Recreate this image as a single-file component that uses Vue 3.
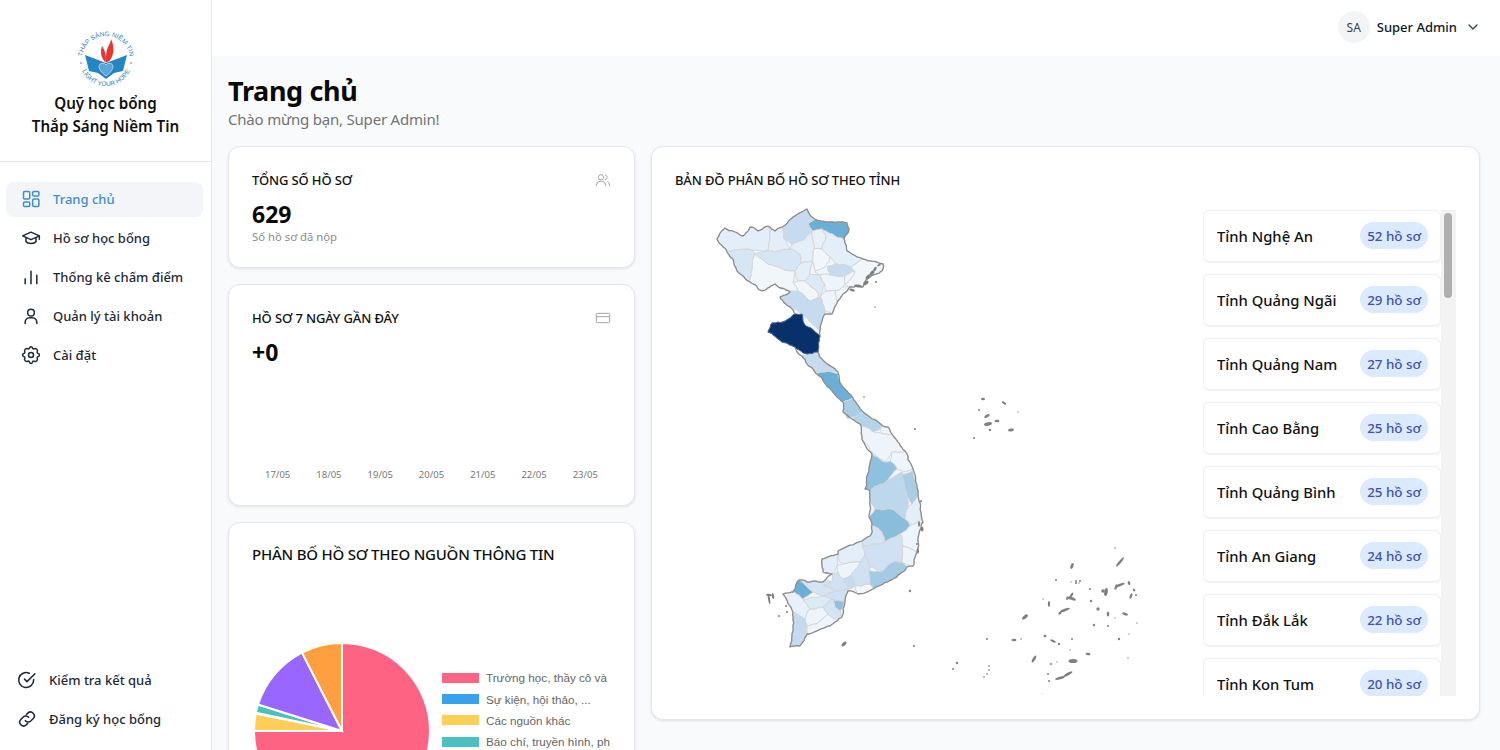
<template>
  <div class="layout">
    <!-- sidebar -->
    <aside class="sidebar">
      <div class="brand">
        <svg class="logo" viewBox="0 0 60 60" width="60" height="60">
          <defs>
            <path id="arcTop" d="M6 30 A24 24 0 0 1 54 30" />
            <path id="arcBottom" d="M5 38 A26.3 26.3 0 0 0 55 38" />
          </defs>
          <text class="logo-text"><textPath href="#arcTop" startOffset="50%" text-anchor="middle">THẮP SÁNG NIỀM TIN</textPath></text>
          <text class="logo-text"><textPath href="#arcBottom" startOffset="50%" text-anchor="middle">LIGHT YOUR HOPE</textPath></text>
          <path d="M9 25 L30 33 L51 25 L47 41 L38 43 L30 49 L22 43 L13 41 Z" fill="#2584c2" />
          <path d="M35 9 C38 15 39 24 33.500 31 L30 32.500 C30 27 29.500 22 32.500 16 C34 13 35 11 35 9 Z" fill="#e5362f" />
          <path d="M26 16 C24 22 25 28 29.500 32.500 C30.500 27 29.500 21 26 16 Z" fill="#e5362f" />
          <path d="M30 46 C25 42 23 39 23 36.500 C23 33 28 32 30 35 C32 32 37 33 37 36.500 C37 39 35 42 30 46 Z" fill="#5aa6d6" stroke="#d8ebf7" stroke-width=".7" />
          <circle cx="5" cy="33" r=".8" fill="#e5362f" />
          <circle cx="55" cy="33" r=".8" fill="#e5362f" />
        </svg>
        <div class="brand-name">Quỹ học bổng<br />Thắp Sáng Niềm Tin</div>
      </div>

      <nav class="nav">
        <a v-for="item in menu" :key="item.label" class="nav-item" :class="{ active: item.active }">
          <svg class="nav-icon" viewBox="0 0 24 24" fill="none" stroke="currentColor" stroke-width="1.8" stroke-linecap="round" stroke-linejoin="round" v-html="item.icon"></svg>
          <span>{{ item.label }}</span>
        </a>
      </nav>

      <div class="bottom-links">
        <a v-for="item in links" :key="item.label" class="bottom-item">
          <svg class="nav-icon" viewBox="0 0 24 24" fill="none" stroke="currentColor" stroke-width="1.9" stroke-linecap="round" stroke-linejoin="round" v-html="item.icon"></svg>
          <span>{{ item.label }}</span>
        </a>
      </div>
    </aside>

    <div class="content">
      <header class="topbar">
        <div class="avatar">SA</div>
        <span class="user-name">Super Admin</span>
        <svg class="chevron" viewBox="0 0 24 24" width="16" height="16" fill="none" stroke="#374151" stroke-width="2" stroke-linecap="round" stroke-linejoin="round"><path d="M6 9l6 6 6-6" /></svg>
      </header>

      <main class="main">
        <h1 class="title">Trang chủ</h1>
        <p class="subtitle">Chào mừng bạn, Super Admin!</p>

        <div class="grid">
          <div class="left-col">
            <section class="card stat-card">
              <div class="card-head">
                <h3>TỔNG SỐ HỒ SƠ</h3>
                <svg viewBox="0 0 24 24" width="16" height="16" fill="none" stroke="#a3a3a3" stroke-width="1.5" stroke-linecap="round" stroke-linejoin="round"><circle cx="9" cy="8" r="4" /><path d="M2 21v-1a6 6 0 0 1 6-6h2a6 6 0 0 1 6 6v1" /><path d="M15.500 4.200a4 4 0 0 1 0 7.600M19 14.500a6 6 0 0 1 3 5.500v1" /></svg>
              </div>
              <div class="stat-value">629</div>
              <div class="stat-note">Số hồ sơ đã nộp</div>
            </section>

            <section class="card week-card">
              <div class="card-head">
                <h3>HỒ SƠ 7 NGÀY GẦN ĐÂY</h3>
                <svg viewBox="0 0 24 24" width="16" height="16" fill="none" stroke="#a3a3a3" stroke-width="1.5"><rect x="2" y="5" width="20" height="14" rx="1.5" /><path d="M2 10h20" /></svg>
              </div>
              <div class="stat-value">+0</div>
              <div class="dates">
                <span v-for="d in dates" :key="d">{{ d }}</span>
              </div>
            </section>

            <section class="card pie-card">
              <h2>PHÂN BỐ HỒ SƠ THEO NGUỒN THÔNG TIN</h2>
              <div class="pie-row">
                <svg class="pie" viewBox="-90 -90 180 180" width="180" height="180">
                  <path v-for="s in slices" :key="s.color" :d="s.d" :fill="s.color" stroke="#fff" stroke-width="2" />
                </svg>
                <ul class="legend">
                  <li v-for="l in legend" :key="l.text">
                    <i :style="{ background: l.color }"></i>
                    <span>{{ l.text }}</span>
                  </li>
                </ul>
              </div>
            </section>
          </div>

          <section class="card map-card">
            <h3 class="map-title">BẢN ĐỒ PHÂN BỐ HỒ SƠ THEO TỈNH</h3>
            <div class="map-body">
              <svg class="map" viewBox="700 200 480 495" width="480" height="495">
                <polygon :points="outline" fill="#eef4fb" />
                <polygon v-for="(p, i) in provinces" :key="i" :points="p.pts" :fill="p.c" stroke="#d6d6d6" stroke-width="1" stroke-linejoin="round" />
                <polygon :points="outline" fill="none" stroke="#8c8c8c" stroke-width="1.3" stroke-linejoin="round" />
                <polygon :points="darkArea" fill="#08306b" stroke="#4a6690" stroke-width="1" />
                <ellipse v-for="(d, i) in islands" :key="'i' + i" :cx="d[0]" :cy="d[1]" :rx="d[2]" :ry="d[3]" :transform="`rotate(${d[4]} ${d[0]} ${d[1]})`" fill="#808080" />
              </svg>
              <div class="province-list">
                <div v-for="p in ranking" :key="p.name" class="province-row">
                  <span class="province-name">{{ p.name }}</span>
                  <span class="province-badge">{{ p.count }} hồ sơ</span>
                </div>
                <div class="scroll-track"><div class="scroll-thumb"></div></div>
              </div>
            </div>
          </section>
        </div>
      </main>
    </div>
  </div>
</template>

<script setup>
const menu = [
  { label: 'Trang chủ', active: true, icon: '<rect x="3" y="3" width="7.5" height="9" rx="1.5"/><rect x="14" y="3" width="7.5" height="5.5" rx="1.5"/><rect x="3" y="15.5" width="7.5" height="5.5" rx="1.5"/><rect x="14" y="12" width="7.5" height="9" rx="1.5"/>' },
  { label: 'Hồ sơ học bổng', icon: '<path d="M2 9.500 12 5l10 4.500L12 14 2 9.500z"/><path d="M6 12v4.500c2 2.600 10 2.600 12 0V12"/><path d="M22 9.500v4"/>' },
  { label: 'Thống kê chấm điểm', icon: '<path d="M5 20v-6M12 20V5M19 20v-10"/>' },
  { label: 'Quản lý tài khoản', icon: '<circle cx="12" cy="8" r="4"/><path d="M5 21v-1.500A5.500 5.500 0 0 1 10.500 14h3a5.500 5.500 0 0 1 5.500 5.500V21"/>' },
  { label: 'Cài đặt', icon: '<circle cx="12" cy="12" r="3"/><path d="M10.300 3.300c.4-1.800 3-1.800 3.400 0a1.700 1.700 0 0 0 2.600 1.100c1.500-.9 4.300 1.800 3.300 3.300a1.700 1.700 0 0 0 1.100 2.600c1.800.4 1.800 3 0 3.400a1.700 1.700 0 0 0-1.100 2.600c1 1.500-1.800 4.300-3.300 3.300a1.700 1.700 0 0 0-2.600 1.100c-.4 1.800-3 1.800-3.400 0a1.700 1.700 0 0 0-2.600-1.100c-1.500 1-4.300-1.800-3.300-3.300a1.700 1.700 0 0 0-1.100-2.600c-1.800-.4-1.800-3 0-3.400a1.700 1.700 0 0 0 1.100-2.600c-1-1.500 1.800-4.200 3.300-3.300a1.700 1.700 0 0 0 2.600-1.100z"/>' }
]

const links = [
  { label: 'Kiểm tra kết quả', icon: '<path d="M20 11.500V12a9 9 0 1 1-5.300-8.200"/><path d="M9 11l3 3 9.500-9.500"/>' },
  { label: 'Đăng ký học bổng', icon: '<path d="M10 14a4.500 4.500 0 0 0 6.500.4l3-3a4.600 4.600 0 0 0-6.500-6.500l-1.700 1.700"/><path d="M14 10a4.500 4.500 0 0 0-6.500-.4l-3 3a4.600 4.600 0 0 0 6.500 6.500l1.700-1.700"/>' }
]

const dates = ['17/05', '18/05', '19/05', '20/05', '21/05', '22/05', '23/05']

const legend = [
  { color: '#ff6384', text: 'Trường học, thầy cô và' },
  { color: '#36a2eb', text: 'Sự kiện, hội thảo, ...' },
  { color: '#ffce56', text: 'Các nguồn khác' },
  { color: '#4bc0c0', text: 'Báo chí, truyền hình, ph' }
]

// góc tính từ đỉnh, theo chiều kim đồng hồ
const sliceAngles = [
  ['#ff6384', 0, 270],
  ['#ffce56', 270, 281.5],
  ['#36a2eb', 281.5, 282],
  ['#4bc0c0', 282, 287.5],
  ['#9966ff', 287.5, 333],
  ['#ff9f40', 333, 360]
]

const slices = sliceAngles.map(([color, a, b]) => {
  const r = 88
  const pt = (deg) => {
    const t = (deg * Math.PI) / 180
    return `${(r * Math.sin(t)).toFixed(2)} ${(-r * Math.cos(t)).toFixed(2)}`
  }
  return { color, d: `M0 0 L${pt(a)} A${r} ${r} 0 ${b - a > 180 ? 1 : 0} 1 ${pt(b)} Z` }
})

const ranking = [
  { name: 'Tỉnh Nghệ An', count: 52 },
  { name: 'Tỉnh Quảng Ngãi', count: 29 },
  { name: 'Tỉnh Quảng Nam', count: 27 },
  { name: 'Tỉnh Cao Bằng', count: 25 },
  { name: 'Tỉnh Quảng Bình', count: 25 },
  { name: 'Tỉnh An Giang', count: 24 },
  { name: 'Tỉnh Đắk Lắk', count: 22 },
  { name: 'Tỉnh Kon Tum', count: 20 }
]

// làm gồ ghề cạnh bản đồ; jitter chỉ phụ thuộc trung điểm nên cạnh chung vẫn khớp
const noise = (x, y) => {
  const s = Math.sin(x * 12.9898 + y * 78.233) * 43758.5453
  return s - Math.floor(s) - 0.5
}

const subdivide = (a, b, depth) => {
  const len = Math.hypot(a[0] - b[0], a[1] - b[1])
  if (depth === 0 || len < 3) return []
  const amp = Math.min(len * 0.22, 2.4)
  const mx = (a[0] + b[0]) / 2
  const my = (a[1] + b[1]) / 2
  const m = [mx + noise(mx, my) * amp, my + noise(my, mx) * amp]
  return [...subdivide(a, m, depth - 1), m, ...subdivide(m, b, depth - 1)]
}

const roughen = (str) => {
  const pts = str.split(' ').map((p) => p.split(',').map(Number))
  const out = []
  pts.forEach((p, i) => {
    out.push(p, ...subdivide(p, pts[(i + 1) % pts.length], 3))
  })
  return out.map((p) => `${p[0].toFixed(1)},${p[1].toFixed(1)}`).join(' ')
}

const rawProvinces = [
  { c: '#e3eef9', pts: '717,240 725,229 735,233 743,237 750,228 758,232 768,227 770,240 768,252 752,251 735,251 727,253' },
  { c: '#d7e6f5', pts: '727,253 735,251 752,251 755,255 752,270 750,283 737,272 733,260' },
  { c: '#f1f6fb', pts: '755,255 768,265 778,268 795,272 793,283 798,292 785,290 775,285 762,292 750,283 752,270' },
  { c: '#e3eef9', pts: '768,227 775,232 782,228 784,240 790,250 780,252 768,252 770,240' },
  { c: '#d7e6f5', pts: '768,252 780,252 790,250 800,255 800,265 795,272 778,268 768,265 755,255' },
  { c: '#c6dbef', pts: '782,228 793,218 807,210 815,220 808,225 812,232 805,240 792,246 784,240' },
  { c: '#6baed6', pts: '808,225 815,220 828,223 847,224 849,230 844,240 835,237 822,230 812,232' },
  { c: '#e3eef9', pts: '792,246 805,240 812,232 814,250 812,262 800,265 800,255 790,250' },
  { c: '#e8f0fa', pts: '812,232 822,230 826,240 822,250 814,250' },
  { c: '#f1f6fb', pts: '814,250 822,250 830,258 825,268 815,272 812,262' },
  { c: '#e3eef9', pts: '822,230 835,237 844,240 847,252 863,260 850,268 835,265 830,258 822,250 826,240' },
  { c: '#c6dbef', pts: '827,268 835,265 850,268 855,272 845,277 830,276' },
  { c: '#f1f6fb', pts: '850,268 863,260 883,265 882,272 867,280 863,288 850,288 845,285 855,272' },
  { c: '#e3eef9', pts: '795,272 800,265 812,262 810,275 805,282 798,282' },
  { c: '#f1f6fb', pts: '810,275 812,262 815,272 820,276' },
  { c: '#f1f6fb', pts: '793,283 798,282 805,282 815,290 820,298 810,302 798,292' },
  { c: '#dceaf6', pts: '805,282 810,275 820,276 825,285 820,298 815,290' },
  { c: '#eef4fb', pts: '825,285 820,276 830,276 845,277 845,285 843,288 835,292 826,292' },
  { c: '#f1f6fb', pts: '835,292 843,288 850,288 843,295 838,303' },
  { c: '#eef4fb', pts: '820,298 826,292 835,292 838,303 832,315 825,312' },
  { c: '#c6dbef', pts: '780,298 790,293 798,292 810,302 820,298 825,312 825,315 820,332 812,325 802,315 790,308' },
  { c: '#c6dbef', pts: '802,357 807,355 818,353 825,363 838,373 817,373 807,365' },
  { c: '#6baed6', pts: '817,375 825,373 838,375 842,387 853,399 843,403 832,392' },
  { c: '#a9cde5', pts: '843,403 853,399 863,413 857,417 848,420 843,413' },
  { c: '#b5d4e9', pts: '852,420 857,417 863,413 883,427 880,430 873,433 860,425' },
  { c: '#eef4fb', pts: '880,430 883,427 888,428 892,435 883,435' },
  { c: '#eef4fb', pts: '862,440 860,425 873,433 883,435 892,435 905,452 892,453 885,463 872,453' },
  { c: '#eef4fb', pts: '892,453 905,452 913,470 903,473 897,470 890,462' },
  { c: '#8fc1de', pts: '872,455 885,463 890,462 897,470 887,482 870,492 865,490 867,477 870,465' },
  { c: '#bdd7ec', pts: '870,492 887,482 902,473 908,507 905,520 892,510 875,510 870,500' },
  { c: '#a9cde5', pts: '902,475 913,472 918,495 912,505 907,497' },
  { c: '#e3eef9', pts: '908,507 912,505 918,495 922,520 913,527 905,520' },
  { c: '#8abcdc', pts: '875,510 892,510 905,520 910,527 900,535 885,543 882,533 872,526 869,518' },
  { c: '#eef4fb', pts: '910,527 923,523 918,540 917,553 903,547 900,535' },
  { c: '#d3e4f3', pts: '872,526 882,533 885,543 875,545 862,547 862,542 870,537' },
  { c: '#cfe1f2', pts: '885,543 900,535 903,547 902,563 893,563 883,572 870,568 865,555 862,547 875,545' },
  { c: '#eef4fb', pts: '903,547 917,553 913,567 902,563' },
  { c: '#a5cbe4', pts: '868,572 883,572 893,563 902,563 907,568 893,580 873,590 870,585 870,568' },
  { c: '#e3eef9', pts: '838,552 862,542 862,547 865,555 860,563 843,565 838,560' },
  { c: '#cfe1f2', pts: '860,563 865,555 870,568 870,585 855,587 850,577' },
  { c: '#e3eef9', pts: '822,560 838,555 838,565 832,575 823,573' },
  { c: '#eef4fb', pts: '837,567 843,565 860,563 850,577 843,580 838,573' },
  { c: '#c6dbef', pts: '843,580 850,577 855,587 848,590' },
  { c: '#f4f8fc', pts: '855,587 870,585 873,590 858,595' },
  { c: '#cfe1f2', pts: '832,583 832,575 838,573 843,580 848,590 835,592 823,587' },
  { c: '#6baed6', pts: '799,581 802,583 813,593 803,600 793,593' },
  { c: '#d3e4f3', pts: '802,583 807,583 832,583 823,587 835,592 823,597 813,593' },
  { c: '#e8f0fa', pts: '783,595 793,593 803,600 810,610 805,620 793,613' },
  { c: '#dceaf6', pts: '803,600 823,597 832,600 823,608 810,610' },
  { c: '#cfe1f2', pts: '823,597 835,592 848,590 845,602 832,600' },
  { c: '#8fc1de', pts: '832,600 845,602 840,612 835,608' },
  { c: '#d3e4f3', pts: '823,608 832,600 835,608 840,612 842,618 837,622 828,615' },
  { c: '#eef4fb', pts: '810,610 823,608 828,615 817,625 807,627 805,620' },
  { c: '#eef4fb', pts: '817,625 828,615 837,622 830,627 807,635 807,627' },
  { c: '#c6dbef', pts: '793,620 793,613 805,620 807,635 800,647 790,648 792,637' }
]

const provinces = rawProvinces.map((p) => ({ c: p.c, pts: roughen(p.pts) }))

const darkArea = roughen('768,333 772,324 783,323 795,315 802,315 806,327 820,337 818,353 807,355 795,348 782,343')

const outline = roughen('717,240 725,229 735,233 743,237 750,228 758,232 768,227 775,232 782,228 793,218 807,210 815,220 828,223 847,224 849,230 844,240 847,252 863,260 883,265 882,272 867,280 863,288 850,288 843,295 832,315 825,315 820,332 820,337 818,353 825,363 838,373 842,387 853,399 863,413 883,427 888,428 892,435 905,452 913,470 918,495 922,520 923,523 918,540 917,553 913,567 907,568 893,580 873,590 858,595 848,592 845,602 842,618 837,622 830,627 807,635 800,647 790,648 792,637 793,620 793,613 783,595 793,593 799,581 807,583 823,583 832,575 823,573 822,560 838,555 838,552 862,542 870,537 872,526 869,518 870,500 870,492 865,490 867,477 870,465 872,455 862,440 860,425 852,420 843,413 843,403 832,392 817,375 807,365 802,357 795,348 782,343 768,333 772,324 783,323 795,315 790,308 780,298 790,293 775,285 762,292 750,283 737,272 733,260 727,253')

// đảo nhỏ: cx, cy, rx, ry, góc
const islands = [
  [983, 400, 2, 1.200, 0], [1004, 404, 2.500, 1.200, 30], [979, 411, 1, 1, 0], [987, 417, 3, 1.500, -30], [988, 425, 4, 1.800, -10], [997, 422, 2.500, 1.200, 0], [990, 431, 1.200, 1.200, 0], [1011, 431, 3, 1.500, -10], [974, 439, 1, 1, 0], [1018, 413, .7, .7, 0],
  [1115, 549, .8, .8, 0], [1120, 563, 6, 1.300, -50], [1072, 567, 3, 1.500, -70], [1076, 582, 1, 1, 0], [1056, 581, 1, 1, 0], [1071, 583, .7, .7, 0], [1079, 584, .7, .7, 0], [1076, 584, 1, 1, 0], [1071, 597, 4, 1.200, -60], [1080, 582, 1, 1, 0], [1090, 590, 1, 1, 0], [1106, 593, 4, 1.800, -80], [1103, 592, 1.800, 1.800, 0], [1120, 586, 5, 1.200, -20], [1116, 588, 3, 1.200, -70], [1129, 584, 2, 1.200, 70], [1134, 591, 1.500, 1.200, 60], [1136, 596, 1, 1, 0], [1131, 597, 3, 1.200, -70], [1070, 599, 4, 1.300, 10], [1073, 600, 3, 1.300, 20], [1067, 600, 1, 1, 0], [1043, 600, .7, .7, 0], [1049, 605, 3, 1.200, 90], [1091, 602, 1.200, 1.200, 0], [1098, 610, 1.700, 1.700, 0], [1108, 615, 2.500, 1.300, 90], [1125, 615, 3, 1.300, 20], [1065, 611, 5, 1.300, -20], [1060, 614, 2, 1.200, -40], [1115, 619, .7, .7, 0], [1094, 626, 1.200, 1.200, 0], [1108, 627, 1, 1, 0], [1137, 624, .7, .7, 0], [1025, 618, 3.500, 1.600, -40],
  [987, 640, 1, 1, 0], [1014, 641, 2.500, 1.200, 0], [1021, 640, .8, .8, 0], [1045, 637, 1.500, 1.200, -20], [1053, 642, 3, 1.200, 25], [1059, 645, 1.200, 1.200, 0], [1072, 640, 1, 1, 0], [1119, 640, 1.200, 1.200, 0], [1129, 635, .7, .7, 0], [1088, 655, 2.500, 1.200, 10], [1070, 651, .7, .7, 0], [1034, 660, 4, 1.300, -60], [1051, 665, 1, 1, 0], [1057, 663, .7, .7, 0], [1073, 662, 4.500, 2, 0], [1128, 659, .7, .7, 0],
  [957, 664, 1.200, 1.200, 0], [953, 670, 1, 1, 0], [989, 667, 1, .8, 0], [989, 671, 1, .8, 0], [987, 675, 1, .8, 0], [984, 678, 1, .8, 0], [1068, 675, 5, 1.300, -30], [1060, 679, 5, 1.300, -15], [1048, 675, 1, 1, 0], [1049, 682, 1, 1, 0], [1042, 695, .6, .6, 0],
  // quanh Hạ Long, Phú Quốc, Côn Đảo
  [868, 278, 3, 1.700, -50], [872, 274, 3, 1.700, -50], [866, 284, 3, 1.700, -40], [858, 287, 4, 1.400, 10], [852, 291, 3, 1.200, 20], [875, 270, 2.500, 1.300, -60], [879, 266, 2, 1, -30], [876, 283, 1, 1, 0], [875, 308, .8, .8, 0], [864, 398, 1, .8, 0],
  [769, 596, 3, 1.200, 10], [769, 600, 1, 5, -10], [773, 597, 1.200, 3, -10], [786, 607, 1, 1, 0], [787, 613, 1, 1, 0], [779, 617, 1, 1, 0], [910, 592, 1.200, 1.200, 0], [844, 645, 3, 1.700, -40], [914, 647, 1, 1, 0],
  [915, 430, 1, 1, 0], [921, 502, 1, 1, 0], [919, 525, 1, 3, 0], [922, 530, 1.500, 2.500, 0], [917, 545, 1, 1, 0], [918, 552, 1, 3, 0]
]
</script>

<style>
html, body {
  margin: 0;
  height: 100%;
  overflow: hidden;
}
</style>

<style scoped>
* {
  box-sizing: border-box;
}

.layout {
  display: flex;
  height: 750px;
  overflow: hidden;
  font-family: "Noto Sans", "Open Sans", sans-serif;
  color: #111827;
  background: #f8fafc;
}

/* sidebar */
.sidebar {
  width: 212px;
  flex-shrink: 0;
  display: flex;
  flex-direction: column;
  background: #fff;
  border-right: 1px solid #e5e7eb;
}

.brand {
  height: 162px;
  padding-top: 30px;
  text-align: center;
  border-bottom: 1px solid #e5e7eb;
}

.logo {
  display: block;
  margin: 0 auto;
}

.logo-text {
  font-family: "Liberation Sans", sans-serif;
  font-size: 6.500px;
  fill: #1f7fbd;
}

.brand-name {
  margin-top: 2px;
  font-size: 15.200px;
  font-weight: 600;
  line-height: 23px;
  color: #111;
}

.nav {
  padding: 20px 8px 0 6px;
  display: flex;
  flex-direction: column;
  gap: 4px;
}

.nav-item {
  height: 35px;
  display: flex;
  align-items: center;
  gap: 12px;
  padding: 0 0 2px 15px;
  border-radius: 8px;
  font-size: 13px;
  font-weight: 500;
  color: #1f2937;
}

.nav-item.active {
  background: #f3f5f8;
  color: #3b8fd6;
}

.nav-icon {
  width: 20px;
  height: 20px;
  flex-shrink: 0;
}

.bottom-links {
  margin-top: auto;
  padding: 0 0 14px 17px;
  display: flex;
  flex-direction: column;
  gap: 4px;
}

.bottom-item {
  height: 35px;
  display: flex;
  align-items: center;
  gap: 12px;
  font-size: 13px;
  font-weight: 500;
  color: #1f2937;
}

/* topbar */
.content {
  flex: 1;
  min-width: 0;
  display: flex;
  flex-direction: column;
}

.topbar {
  height: 56px;
  flex-shrink: 0;
  display: flex;
  align-items: center;
  justify-content: flex-end;
  padding: 0 19px 2px 0;
  background: #fff;
}

.avatar {
  width: 32px;
  height: 32px;
  margin-right: 7px;
  border-radius: 50%;
  background: #f3f4f6;
  display: flex;
  align-items: center;
  justify-content: center;
  font-size: 12px;
  color: #374151;
}

.user-name {
  font-size: 13px;
  font-weight: 500;
  margin-right: 8px;
}

/* main */
.main {
  flex: 1;
  min-height: 0;
  overflow: hidden;
  padding: 16px 20px 0 16px;
}

.title {
  margin: 0;
  font-size: 27px;
  font-weight: 700;
  letter-spacing: -.35px;
  line-height: 37px;
  color: #0a0a0a;
}

.subtitle {
  margin: 0 0 17px;
  font-size: 15px;
  letter-spacing: -.2px;
  line-height: 20px;
  color: #737373;
}

.grid {
  display: grid;
  grid-template-columns: 407px 829px;
  gap: 16px;
  align-items: start;
}

.left-col {
  display: flex;
  flex-direction: column;
  gap: 16px;
}

.card {
  background: #fff;
  border: 1px solid #e5e7eb;
  border-radius: 12px;
  box-shadow: 0 1px 3px rgba(0, 0, 0, .1);
  padding: 23px;
}

.card-head {
  display: flex;
  justify-content: space-between;
  align-items: center;
  height: 20px;
}

.card-head h3,
.map-title {
  margin: 0;
  font-size: 13px;
  font-weight: 500;
  letter-spacing: -.13px;
  color: #111;
}

.stat-card {
  height: 122px;
}

.stat-value {
  margin-top: 9px;
  font-size: 23px;
  font-weight: 700;
  line-height: 30px;
  color: #0a0a0a;
}

.stat-note {
  font-size: 11.300px;
  line-height: 16px;
  color: #8c8c8c;
}

.week-card {
  height: 222px;
  display: flex;
  flex-direction: column;
}

.dates {
  margin-top: auto;
  margin-bottom: 1px;
  padding: 0;
  display: flex;
  justify-content: space-around;
  font-size: 9.500px;
  line-height: 12px;
  color: #777;
}

.pie-card {
  padding-top: 21px;
  height: 300px;
}

.pie-card h2 {
  margin: 0;
  font-size: 15px;
  font-weight: 500;
  letter-spacing: -.22px;
  line-height: 21px;
  color: #111;
}

.pie-row {
  display: flex;
  margin-top: 77px;
}

.pie {
  flex-shrink: 0;
  margin-top: -1px;
}

.legend {
  list-style: none;
  margin: 25px 0 0 10px;
  padding: 0;
  font-family: "Liberation Sans", Arial, sans-serif;
  font-size: 11.700px;
  color: #666;
}

.legend li {
  height: 21.400px;
  display: flex;
  align-items: center;
  white-space: nowrap;
}

.legend i {
  width: 37px;
  height: 10px;
  margin-right: 7px;
  flex-shrink: 0;
}

/* map */
.map-card {
  height: 574px;
  overflow: hidden;
  padding: 23px 23px 0;
}

.map-title {
  line-height: 20px;
}

.map-body {
  display: flex;
  margin-top: 20px;
  height: 486px;
}

.map {
  flex-shrink: 0;
  margin-left: 25px;
  margin-top: -11px;
  filter: blur(.4px);
}

.province-list {
  position: relative;
  width: 253px;
  margin-left: 23px;
  height: 486px;
  overflow: hidden;
  padding-right: 15px;
  display: flex;
  flex-direction: column;
  gap: 12px;
}

.province-row {
  height: 52px;
  flex-shrink: 0;
  display: flex;
  align-items: center;
  justify-content: space-between;
  padding: 0 12px 1px 13px;
  background: #fff;
  border: 1px solid #f0f0f0;
  border-radius: 6px;
  box-shadow: 0 1px 2px rgba(0, 0, 0, .05);
}

.province-name {
  font-size: 14.800px;
  font-weight: 500;
  color: #111;
}

.province-badge {
  height: 27px;
  padding: 0 7px;
  display: flex;
  align-items: center;
  border-radius: 14px;
  background: #dbeafe;
  font-size: 13.400px;
  font-weight: 500;
  color: #3f51b5;
}

/* thanh cuộn giả */
.scroll-track {
  position: absolute;
  top: 0;
  right: 0;
  width: 15px;
  height: 100%;
  background: #f3f3f3;
}

.scroll-thumb {
  width: 8px;
  height: 85px;
  margin: 3px 0 0 3px;
  border-radius: 4px;
  background: #b0b0b0;
}
</style>
